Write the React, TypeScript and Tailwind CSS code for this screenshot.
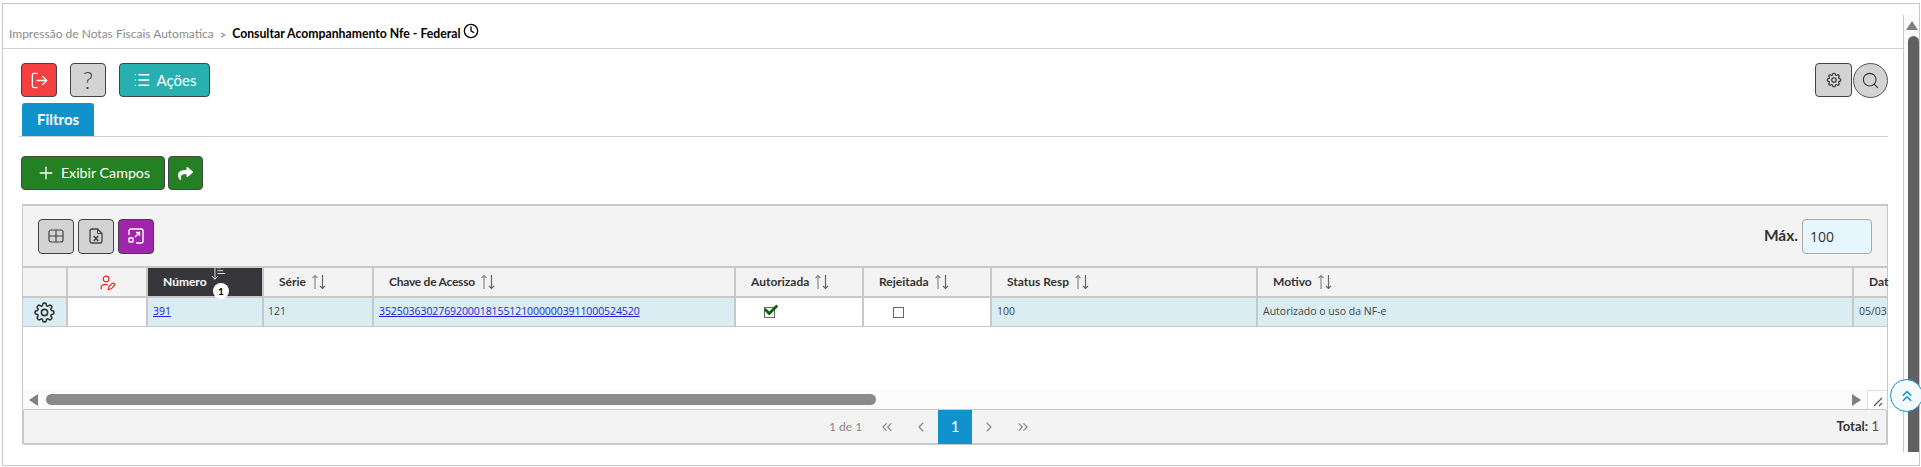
import { ChevronLeft, ChevronRight, ChevronsLeft, ChevronsRight, ChevronsUp, Clock, List, LogOut, Plus, Search, UserPen, ArrowDownNarrowWide } from 'lucide-react';
import { FaCheck, FaShare } from 'react-icons/fa';
import { HiOutlineCog8Tooth } from 'react-icons/hi2';

function SortIcon() {
    return (
        <svg width="16" height="16" viewBox="0 0 16 16" fill="none" stroke="#8a8a8a" strokeWidth="1.2" className="ml-[5px] shrink-0">
            <path d="M4 15V1.5M1.5 4L4 1.5L6.5 4" />
            <path d="M11.5 1v13.5M9 12l2.5 2.5L14 12" stroke="#666" />
        </svg>
    );
}

function HeadCell({ label, className }: { label: string; className: string }) {
    return (
        <div className={`flex h-[28px] shrink-0 items-center border-r-2 border-[#c8c8c8] text-[12px] font-bold text-[#333] ${className}`}>
            <span>{label}</span>
            <SortIcon />
        </div>
    );
}

const btn = 'flex h-[35px] w-[36px] items-center justify-center rounded-[4px] border border-[#444] bg-[#d3d3d3]';

export default function App() {
    return (
        <div className="h-[467px] w-[1921px] overflow-hidden bg-white pl-[2px] pt-[3px] font-['Lato',sans-serif]">
            <div className="relative flex h-[463px] w-[1918px] border border-[#c8c8c8]">
                <div className="w-[1900px] shrink-0">
                    {/* Breadcrumb */}
                    <div className="flex h-[45px] items-end border-b border-[#d0d0d0] pb-[5px] pl-[6px]">
                        <span className="text-[12px] text-[#8a8a8a]">Impressão de Notas Fiscais Automatica</span>
                        <span className="mx-[6px] text-[11px] text-[#777]">&gt;</span>
                        <span className="text-[12.25px] font-bold leading-[18px] text-black">Consultar Acompanhamento Nfe - Federal</span>
                        <Clock className="mb-[4px] ml-[2px] h-[16px] w-[16px] text-black" strokeWidth={2} />
                    </div>

                    <div className="pl-[16px] pr-[15px] pt-[14px]">
                        {/* Actions */}
                        <div className="flex h-[34px] items-center pl-[2px]">
                            <button className="flex h-[34px] w-[36px] items-center justify-center rounded-[4px] border border-[#444] bg-[#f44040] text-white">
                                <LogOut className="h-[19px] w-[19px]" strokeWidth={1.6} />
                            </button>
                            <button className="ml-[13px] flex h-[34px] w-[36px] items-center justify-center rounded-[4px] border border-[#444] bg-[#d3d3d3] text-[24px] font-light text-[#444]">?</button>
                            <button className="ml-[13px] flex h-[34px] w-[91px] items-center justify-center gap-[6px] rounded-[4px] border border-[#444] bg-[#28b0b0] text-[15px] text-white">
                                <List className="h-[18px] w-[18px]" strokeWidth={1.7} />
                                Ações
                            </button>
                            <div className="ml-auto flex items-center gap-[1px]">
                                <button className="flex h-[34px] w-[37px] items-center justify-center rounded-[4px] border border-[#444] bg-[#d3d3d3]">
                                    <HiOutlineCog8Tooth className="h-[18px] w-[18px] text-[#333]" />
                                </button>
                                <button className="flex h-[35px] w-[35px] items-center justify-center rounded-full border border-[#555] bg-[#d3d3d3]">
                                    <Search className="h-[19px] w-[19px] text-[#333]" strokeWidth={1.4} />
                                </button>
                            </div>
                        </div>

                        {/* Tabs */}
                        <div className="mt-[6px] border-b border-[#d0d0d0] pl-[3px]">
                            <div className="flex h-[33px] w-[72px] items-center justify-center rounded-t-[3px] bg-[#1092cd] text-[15px] font-bold text-white">Filtros</div>
                        </div>

                        {/* Filter buttons */}
                        <div className="mt-[19px] flex gap-[3px] pl-[2px]">
                            <button className="flex h-[34px] w-[144px] items-center justify-center gap-[5px] rounded-[4px] border border-[#444] bg-[#238023] text-[14.25px] text-white">
                                <Plus className="h-[20px] w-[20px]" strokeWidth={1.6} />
                                Exibir Campos
                            </button>
                            <button className="flex h-[34px] w-[35px] items-center justify-center rounded-[4px] border border-[#444] bg-[#238023] text-white">
                                <FaShare className="h-[15px] w-[15px]" />
                            </button>
                        </div>

                        {/* Data table panel */}
                        <div className="ml-[3px] mt-[14px] h-[241px] border-x border-t-2 border-[#c8c8c8]">
                            <div className="flex h-[62px] items-center gap-[4px] border-b-2 border-[#c8c8c8] bg-[#f3f3f3] pl-[15px] pr-[15px]">
                                <button className={btn}>
                                    <svg width="16" height="14" viewBox="0 0 16 14" fill="none" stroke="#444" strokeWidth="1.2">
                                        <rect x="1" y="1" width="14" height="12" rx="2" />
                                        <path d="M8 1v12M1 7h14" />
                                    </svg>
                                </button>
                                <button className={btn}>
                                    <svg width="14" height="16" viewBox="0 0 14 16" fill="none" stroke="#444" strokeWidth="1.3">
                                        <path d="M8.5 1H3a2 2 0 0 0-2 2v10a2 2 0 0 0 2 2h8a2 2 0 0 0 2-2V5.5z" />
                                        <path d="M8.5 1v4.5H13" strokeWidth="1" />
                                        <path d="M4.8 8l4.4 5M9.2 8l-4.4 5" strokeWidth="1.6" />
                                    </svg>
                                </button>
                                <button className={`${btn} !bg-[#a024ac]`}>
                                    <svg width="16" height="16" viewBox="0 0 16 16" fill="none" stroke="white" strokeWidth="1.4">
                                        <path d="M1 7V3a2 2 0 0 1 2-2h10a2 2 0 0 1 2 2v10a2 2 0 0 1-2 2H8" />
                                        <rect x="1" y="10" width="4" height="4" rx="0.5" />
                                        <path d="M7 9l4.5-4.5M8 4.5h3.5V8" />
                                    </svg>
                                </button>
                                <span className="ml-auto text-[15.5px] font-bold text-[#333]">Máx.</span>
                                <input readOnly value="100" className="h-[35px] w-[70px] rounded-[4px] border border-[#aaa] bg-[#e6f6fd] pl-[7px] font-['Open_Sans',sans-serif] text-[14px] text-[#333]" />
                            </div>

                            {/* Header */}
                            <div className="flex border-b-2 border-[#c8c8c8] bg-[#f3f3f3]">
                                <div className="h-[28px] w-[45px] shrink-0 border-r-2 border-[#c8c8c8]" />
                                <div className="flex h-[28px] w-[80px] shrink-0 items-center justify-center border-r-2 border-[#c8c8c8]">
                                    <UserPen className="h-[17px] w-[17px] text-[#f02020]" strokeWidth={1.6} />
                                </div>
                                <div className="relative flex h-[28px] w-[116px] shrink-0 items-center border-r-2 border-[#c8c8c8] bg-[#37373b] pl-[15px] text-[12px] font-bold text-white">
                                    Número
                                    <ArrowDownNarrowWide className="absolute left-[62px] top-[-3px] h-[17px] w-[17px] text-[#ddd]" strokeWidth={1.4} />
                                    <span className="absolute left-[65px] top-[15px] flex h-[16px] w-[16px] items-center justify-center rounded-full bg-white text-[10px] font-bold text-black">1</span>
                                </div>
                                <HeadCell label="Série" className="w-[110px] pl-[15px]" />
                                <HeadCell label="Chave de Acesso" className="w-[362px] pl-[15px] tracking-[-0.25px]" />
                                <HeadCell label="Autorizada" className="w-[128px] pl-[15px]" />
                                <HeadCell label="Rejeitada" className="w-[128px] pl-[15px]" />
                                <HeadCell label="Status Resp" className="w-[266px] pl-[15px]" />
                                <HeadCell label="Motivo" className="w-[596px] pl-[15px]" />
                                <div className="flex h-[28px] items-center pl-[15px] text-[12px] font-bold text-[#333]">Dat</div>
                            </div>

                            {/* Row */}
                            <div className="flex h-[29px] overflow-hidden border-b border-[#c8c8c8] font-['Open_Sans',sans-serif] text-[10.5px] text-[#444]">
                                <div className="flex w-[45px] shrink-0 items-center justify-center border-r-2 border-[#c8c8c8] bg-[#d9edf3]">
                                    <HiOutlineCog8Tooth className="h-[25px] w-[25px] text-[#333]" />
                                </div>
                                <div className="w-[80px] shrink-0 border-r-2 border-[#c8c8c8] bg-white" />
                                <div className="flex w-[116px] shrink-0 items-center border-r-2 border-[#c8c8c8] bg-[#d9edf3] pl-[5px]">
                                    <a href="#" className="text-[#2222dd] underline">391</a>
                                </div>
                                <div className="flex w-[110px] shrink-0 items-center border-r-2 border-[#c8c8c8] bg-[#d9edf3] pl-[4px]">121</div>
                                <div className="flex w-[362px] shrink-0 items-center border-r-2 border-[#c8c8c8] bg-[#d9edf3] pl-[5px]">
                                    <a href="#" className="tracking-[-0.08px] text-[#2222dd] underline">35250363027692000181551210000003911000524520</a>
                                </div>
                                <div className="flex w-[128px] shrink-0 items-center border-r-2 border-[#c8c8c8] bg-white pl-[28px]">
                                    <span className="relative block h-[11px] w-[11px] border border-[#666] bg-white">
                                        <FaCheck className="absolute left-[-1px] top-[-5px] h-[14px] w-[14px] text-[#0a640a]" />
                                    </span>
                                </div>
                                <div className="flex w-[128px] shrink-0 items-center border-r-2 border-[#c8c8c8] bg-white pl-[29px]">
                                    <span className="block h-[11px] w-[11px] border border-[#666] bg-white" />
                                </div>
                                <div className="flex w-[266px] shrink-0 items-center border-r-2 border-[#c8c8c8] bg-[#d9edf3] pl-[5px]">100</div>
                                <div className="flex w-[596px] shrink-0 items-center border-r-2 border-[#c8c8c8] bg-[#d9edf3] pl-[5px]">Autorizado o uso da NF-e</div>
                                <div className="flex flex-1 items-center bg-[#d9edf3] pl-[5px]">05/03</div>
                            </div>

                            <div className="h-[63px]" />

                            {/* Horizontal scrollbar */}
                            <div className="flex h-[19px] items-center bg-[#fbfbfb]">
                                <span className="ml-[6px] h-0 w-0 border-y-[6px] border-r-[9px] border-y-transparent border-r-[#808080]" />
                                <span className="ml-[8px] h-[11px] w-[830px] rounded-full bg-[#8a8a8a]" />
                                <span className="ml-auto h-0 w-0 border-y-[6px] border-l-[9px] border-y-transparent border-l-[#808080]" />
                                <span className="ml-[6px] flex h-[19px] w-[20px] items-end justify-center border-l border-t border-[#ddd] bg-white pb-[2px]">
                                    <svg width="10" height="10" viewBox="0 0 10 10" stroke="#555" strokeWidth="1.2">
                                        <path d="M1 9L9 1M6 9L9 6" />
                                    </svg>
                                </span>
                            </div>

                            {/* Pagination */}
                            <div className="flex h-[36px] items-center rounded-[2px] border border-b-2 border-[#c8c8c8] bg-[#f3f3f3] text-[12px] text-[#888]">
                                <span className="ml-[805px] w-[41px]">1 de 1</span>
                                <span className="flex w-[34px] justify-center"><ChevronsLeft className="h-[16px] w-[16px]" strokeWidth={1.6} /></span>
                                <span className="flex w-[34px] justify-center"><ChevronLeft className="h-[16px] w-[16px]" strokeWidth={1.6} /></span>
                                <span className="flex h-[34px] w-[34px] items-center justify-center bg-[#1092cd] text-[15px] text-white">1</span>
                                <span className="flex w-[34px] justify-center"><ChevronRight className="h-[16px] w-[16px]" strokeWidth={1.6} /></span>
                                <span className="flex w-[34px] justify-center"><ChevronsRight className="h-[16px] w-[16px]" strokeWidth={1.6} /></span>
                                <span className="ml-auto pr-[7px] text-[13px] text-[#7a3a30]"><b className="text-[#333]">Total:</b> 1</span>
                            </div>
                        </div>
                    </div>
                </div>

                {/* Vertical scrollbar */}
                <div className="mb-[13px] mt-[11px] flex w-[16px] shrink-0 flex-col items-end border-l border-[#c8c8c8] bg-[#fbfbfb]">
                    <span className="mr-[1px] mt-[6px] h-0 w-0 border-x-[6px] border-b-[9px] border-x-transparent border-b-[#808080]" />
                    <span className="mt-[6px] w-[11px] flex-1 rounded-t-full bg-[#606060]" />
                </div>

                {/* Back to top */}
                <button className="absolute left-[1887px] top-[375px] flex h-[33px] w-[33px] items-center justify-center rounded-full border border-[#1092cd] bg-[#f4fafd]">
                    <ChevronsUp className="h-[18px] w-[18px] text-[#1092cd]" strokeWidth={2} />
                </button>
            </div>
        </div>
    );
}
